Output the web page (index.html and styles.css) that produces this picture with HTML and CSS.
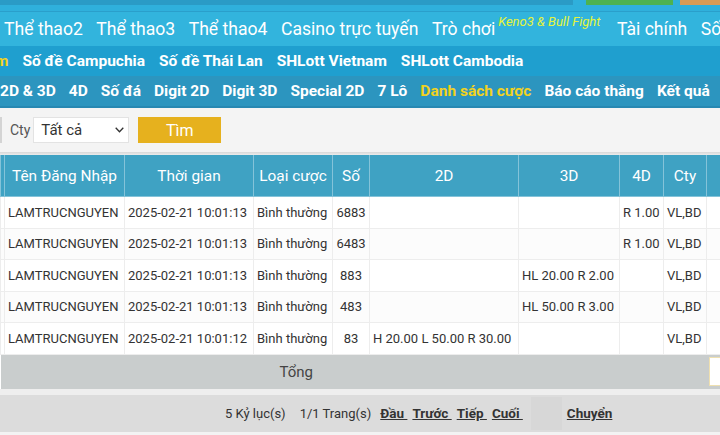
FILE: index.html
```html
<!DOCTYPE html>
<html lang="vi">
<head>
<meta charset="utf-8">
<title>Danh sách cược</title>
<link rel="stylesheet" href="styles.css">
</head>
<body>
<div class="topstrip"><span class="tb dark"></span><span class="tb green"></span><span class="tb orange"></span></div>
<nav class="nav nav1">
  <a>Thể thao2</a><a>Thể thao3</a><a>Thể thao4</a><a>Casino trực tuyến</a><a>Trò chơi<sup class="promo">Keno3 &amp; Bull Fight</sup></a><a>Tài chính</a><a>Số đề</a>
</nav>
<nav class="nav nav2">
  <a class="hl cut">m</a><a>Số đề Campuchia</a><a>Số đề Thái Lan</a><a>SHLott Vietnam</a><a>SHLott Cambodia</a>
</nav>
<nav class="nav nav3">
  <a>2D &amp; 3D</a><a>4D</a><a>Số đá</a><a>Digit 2D</a><a>Digit 3D</a><a>Special 2D</a><a>7 Lô</a><a class="hl">Danh sách cược</a><a>Báo cáo thắng</a><a>Kết quả</a>
</nav>
<div class="filter">
  <span class="edge"></span>
  <span class="lbl">Cty</span>
  <div class="select"><span>Tất cả</span><svg width="9" height="6" viewBox="0 0 9 6"><polyline points="0.7,0.7 4.5,4.8 8.3,0.7" fill="none" stroke="#333" stroke-width="1.3"/></svg></div>
  <div class="btn">Tìm</div>
</div>
<div class="shadow"></div>
<div class="tablewrap">
<table class="grid">
  <colgroup>
    <col class="w0"><col class="w1"><col class="w2"><col class="w3"><col class="w4"><col class="w5"><col class="w6"><col class="w7"><col class="w8"><col class="w9">
  </colgroup>
  <thead>
    <tr><th></th><th>Tên Đăng Nhập</th><th>Thời gian</th><th>Loại cược</th><th>Số</th><th>2D</th><th>3D</th><th>4D</th><th>Cty</th><th>Tiền</th></tr>
  </thead>
  <tbody>
    <tr><td></td><td>LAMTRUCNGUYEN</td><td>2025-02-21 10:01:13</td><td>Bình thường</td><td class="c">6883</td><td></td><td></td><td>R 1.00</td><td>VL,BD</td><td></td></tr>
    <tr class="alt"><td></td><td>LAMTRUCNGUYEN</td><td>2025-02-21 10:01:13</td><td>Bình thường</td><td class="c">6483</td><td></td><td></td><td>R 1.00</td><td>VL,BD</td><td></td></tr>
    <tr><td></td><td>LAMTRUCNGUYEN</td><td>2025-02-21 10:01:13</td><td>Bình thường</td><td class="c">883</td><td></td><td>HL 20.00 R 2.00</td><td></td><td>VL,BD</td><td></td></tr>
    <tr class="alt"><td></td><td>LAMTRUCNGUYEN</td><td>2025-02-21 10:01:13</td><td>Bình thường</td><td class="c">483</td><td></td><td>HL 50.00 R 3.00</td><td></td><td>VL,BD</td><td></td></tr>
    <tr><td></td><td>LAMTRUCNGUYEN</td><td>2025-02-21 10:01:12</td><td>Bình thường</td><td class="c">83</td><td>H 20.00 L 50.00 R 30.00</td><td></td><td></td><td>VL,BD</td><td></td></tr>
  </tbody>
  <tfoot>
    <tr><td class="tot" colspan="9">Tổng</td><td class="tot totin"><div class="inbox"></div></td></tr>
  </tfoot>
</table>
</div>
<div class="pgap"></div>
<div class="pager">
  <span>5 Kỷ lục(s)</span>
  <span class="pages">1/1 Trang(s)</span>
  <a class="first">Đầu&nbsp;</a><a>Trước&nbsp;</a><a>Tiếp&nbsp;</a><a>Cuối&nbsp;</a>
  <span class="gobox"></span>
  <a class="go">Chuyển</a>
</div>
<div class="pend"></div>
</body>
</html>
```
FILE: styles.css
```css
html, body {
  margin: 0;
  padding: 0;
}
body {
  width: 720px;
  height: 435px;
  overflow: hidden;
  background: #f4f4f4;
  font-family: Roboto, "Liberation Sans", sans-serif;
  color: #333;
}
.topstrip {
  height: 11px;
  background: #2fb0dc;
  border-bottom: 1px solid #2a9fcb;
  display: flex;
  align-items: flex-start;
}
.tb { height: 5px; display: block; }
.dark { width: 573px; background: #2a9bc6; }
.green { width: 87px; margin-left: 13px; background: #4db24f; }
.orange { flex: 1; margin-left: 7px; background: #d99b55; }

.nav {
  display: flex;
  align-items: center;
  white-space: nowrap;
  overflow: hidden;
  color: #fff;
}
.nav a { flex: none; }
.nav1 {
  height: 34px;
  padding-left: 4px;
  gap: 13.5px;
  background: #32b4dd;
  font-size: 17.6px;
}
.nav1 a { line-height: 34px; }
.promo {
  font-size: 13px;
  font-style: italic;
  color: #e6f43a;
  line-height: 1;
  vertical-align: 9px;
  margin-left: 3px;
  margin-right: 3px;
}
.nav2 {
  height: 30px;
  gap: 14px;
  background: #1f9fcf;
  font-size: 15.5px;
  font-weight: 700;
}
.nav2 .cut { margin-left: -5px; }
.nav3 {
  height: 30px;
  gap: 13px;
  background: #2c95bf;
  border-bottom: 2px solid #2788b2;
  font-size: 15.5px;
  font-weight: 700;
}
.nav .hl { color: #f2d21e; }

.filter {
  height: 44px;
  background: #f4f4f4;
  display: flex;
  align-items: center;
}
.edge { width: 2px; height: 26px; background: #d4d4d4; }
.lbl { margin-left: 8px; font-size: 14px; color: #555; }
.select {
  margin-left: 3px;
  width: 96px;
  height: 26px;
  box-sizing: border-box;
  background: #fff;
  border: 1px solid #e3e3e3;
  display: flex;
  align-items: center;
  justify-content: space-between;
  padding: 0 4px 0 7px;
  font-size: 15px;
  color: #333;
}
.btn {
  margin-left: 9px;
  width: 83px;
  height: 26px;
  background: #e6b11e;
  color: #fff;
  font-size: 16px;
  display: flex;
  align-items: center;
  justify-content: center;
}
.shadow {
  height: 3px;
  background: linear-gradient(#d8d8d8, #ececec);
}

.tablewrap { width: 720px; overflow: hidden; }
.grid {
  border-collapse: collapse;
  table-layout: fixed;
  width: 786px;
  background: #fff;
}
.w0 { width: 4px; }
.w1 { width: 120px; }
.w2 { width: 129px; }
.w3 { width: 79px; }
.w4 { width: 37px; }
.w5 { width: 149px; }
.w6 { width: 101px; }
.w7 { width: 44px; }
.w8 { width: 43px; }
.w9 { width: 80px; }
.grid th {
  height: 41px;
  padding: 0;
  background: #3fa2c3;
  color: #fff;
  font-weight: 400;
  font-size: 15.4px;
  border: 1px solid #84c3d9;
  border-top: none;
  white-space: nowrap;
  overflow: hidden;
}
.grid td {
  height: 30.5px;
  padding: 0 3px;
  font-size: 13px;
  color: #333;
  border: 1px solid #ededed;
  white-space: nowrap;
  overflow: hidden;
}
.grid tr.alt td { background: #fcfcfc; }
.grid td.c { text-align: center; padding: 0; }
.grid td.tot {
  height: 34px;
  background: #c9cdcd;
  border: none;
  font-size: 15px;
  color: #444;
  padding: 0 0 0 279px;
}
.grid td.totin { padding: 0 0 0 2px; }
.inbox {
  height: 27px;
  background: #fff;
  border: 1px solid #efe0b0;
}

.pgap { height: 6px; background: #eeeeee; }
.pager {
  height: 37px;
  background: #dcdcdc;
  display: flex;
  align-items: center;
  padding-left: 225px;
  font-size: 13px;
  color: #333;
  white-space: nowrap;
}
.pages { margin-left: 14px; }
.pager a {
  font-weight: 700;
  font-size: 13.5px;
  text-decoration: underline;
  color: #333;
  margin-right: 5px;
}
.pager a.first { margin-left: 9px; }
.gobox {
  width: 31px;
  height: 33px;
  background: #d7d7d7;
  margin-left: 3px;
}
.pager a.go { margin-left: 5px; }
.pend { height: 3px; background: #f3f3f3; }
```
